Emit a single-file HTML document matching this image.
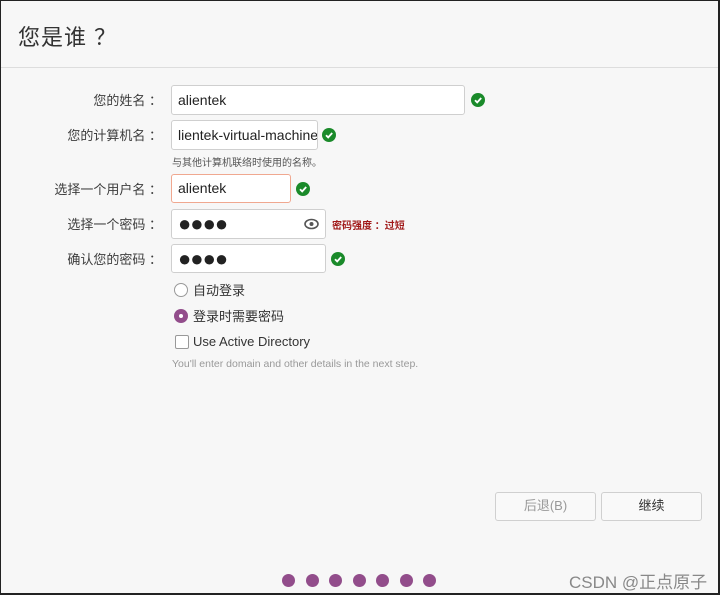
<!DOCTYPE html>
<html><head><meta charset="utf-8"><style>
body{margin:0;width:721px;height:596px;overflow:hidden;background:#fff;font-family:"Liberation Sans","Noto Sans CJK SC",sans-serif;}
#f{position:absolute;left:0;top:0;width:717px;height:592px;border:1px solid #222;border-right-width:2px;border-bottom-width:2px;background:#f7f7f7;}
.a{position:absolute;}
.t{left:17px;top:19px;font-size:22px;color:#333;letter-spacing:1px}
.hr{left:0;top:66px;width:717px;height:1px;background:#ddd;}
.l{font-size:13px;color:#3c3c3c;right:556px;white-space:nowrap;}
.in{background:#fff;border:1px solid #cfcfcf;border-radius:3px;box-sizing:border-box;font-size:14px;color:#222;padding-left:6px;line-height:26px;}
.ck{width:14px;height:14px;border-radius:50%;background:#1a8a2a;}
.ck svg{position:absolute;left:0;top:0}
.dots{font-size:22px;letter-spacing:-1px}
.btn{border:1px solid #d0d0d0;border-radius:3px;background:#f9f9f9;box-sizing:border-box;text-align:center;line-height:26px;font-size:13px;}
.d{width:13px;height:13px;border-radius:50%;background:#924d8b;top:573px;}
</style></head><body><div id="f">
<div class="a t">您是谁 ？</div>
<div class="a hr"></div>
<div class="a l" style="top:89px">您的姓名 ：</div>
<div class="a l" style="top:124px">您的计算机名 ：</div>
<div class="a l" style="top:178px">选择一个用户名 ：</div>
<div class="a l" style="top:213px">选择一个密码 ：</div>
<div class="a l" style="top:248px">确认您的密码 ：</div>
<div class="a in" style="left:170px;top:84px;width:294px;height:30px;line-height:28px">alientek</div>
<div class="a in" style="left:170px;top:119px;width:147px;height:30px;line-height:28px;padding-left:6px;overflow:hidden;white-space:nowrap">lientek-virtual-machine</div>
<div class="a" style="left:171px;top:153px;font-size:10px;color:#555">与其他计算机联络时使用的名称。</div>
<div class="a in" style="left:170px;top:173px;width:120px;height:29px;border-color:#f0a890;line-height:27px">alientek</div>
<div class="a in" style="left:170px;top:208px;width:155px;height:30px;line-height:28px"><span class="dots">●●●●</span></div>
<svg class="a" style="left:303px;top:216px" width="15" height="14" viewBox="0 0 15 14"><ellipse cx="7.5" cy="7" rx="6.5" ry="4.5" fill="none" stroke="#555" stroke-width="1.6"/><circle cx="7.5" cy="7" r="2" fill="#555"/></svg>
<div class="a" style="left:331px;top:216px;font-size:10px;color:#a01818;font-weight:bold">密码强度 ：过短</div>
<div class="a in" style="left:170px;top:243px;width:155px;height:29px;line-height:27px"><span class="dots">●●●●</span></div>
<div class="a ck" style="left:470px;top:92px"><svg width="14" height="14"><path d="M4 7.2l2.2 2.2L10.2 5" fill="none" stroke="#fff" stroke-width="1.8"/></svg></div>
<div class="a ck" style="left:321px;top:127px"><svg width="14" height="14"><path d="M4 7.2l2.2 2.2L10.2 5" fill="none" stroke="#fff" stroke-width="1.8"/></svg></div>
<div class="a ck" style="left:295px;top:181px"><svg width="14" height="14"><path d="M4 7.2l2.2 2.2L10.2 5" fill="none" stroke="#fff" stroke-width="1.8"/></svg></div>
<div class="a ck" style="left:330px;top:251px"><svg width="14" height="14"><path d="M4 7.2l2.2 2.2L10.2 5" fill="none" stroke="#fff" stroke-width="1.8"/></svg></div>
<div class="a" style="left:173px;top:282px;width:12px;height:12px;border:1px solid #999;border-radius:50%;background:#fff"></div>
<div class="a" style="left:192px;top:279px;font-size:13px;color:#333">自动登录</div>
<div class="a" style="left:173px;top:308px;width:14px;height:14px;border-radius:50%;background:#924d8b"></div>
<div class="a" style="left:178px;top:313px;width:4px;height:4px;border-radius:50%;background:#fff"></div>
<div class="a" style="left:192px;top:305px;font-size:13px;color:#333">登录时需要密码</div>
<div class="a" style="left:174px;top:334px;width:12px;height:12px;border:1px solid #999;border-radius:2px;background:#fff"></div>
<div class="a" style="left:192px;top:333px;font-size:13px;color:#333">Use Active Directory</div>
<div class="a" style="left:171px;top:357px;font-size:10.5px;color:#999">You'll enter domain and other details in the next step.</div>
<div class="a btn" style="left:494px;top:491px;width:101px;height:29px;color:#999">后退(B)</div>
<div class="a btn" style="left:600px;top:491px;width:101px;height:29px;color:#333">继续</div>
<div class="a d" style="left:281px"></div><div class="a d" style="left:305px"></div><div class="a d" style="left:328px"></div><div class="a d" style="left:352px"></div><div class="a d" style="left:375px"></div><div class="a d" style="left:399px"></div><div class="a d" style="left:422px"></div>
<div class="a" style="left:568px;top:567px;font-size:17px;color:#888">CSDN @正点原子</div>
</div></body></html>
